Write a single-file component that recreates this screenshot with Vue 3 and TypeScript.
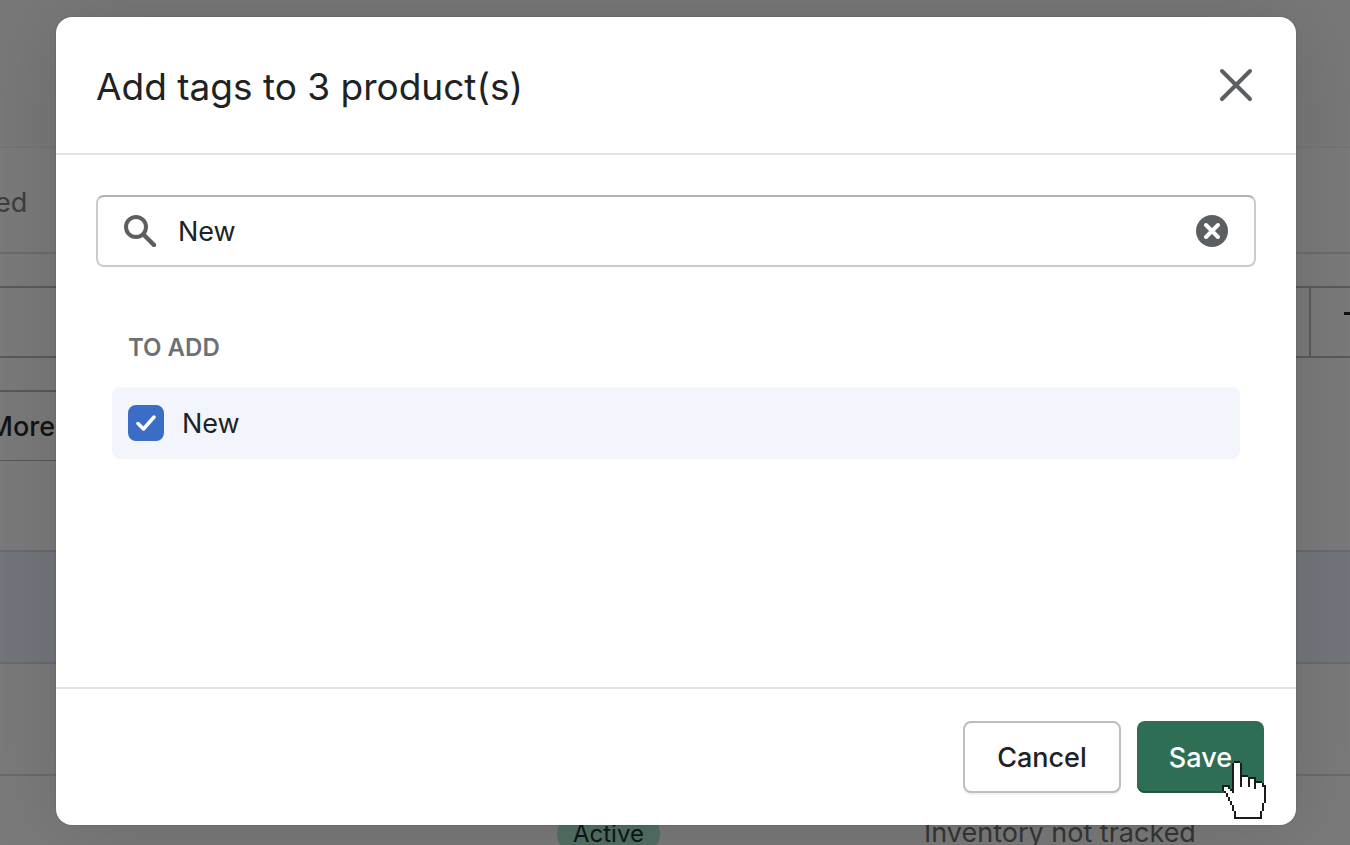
<script setup lang="ts">
import { ref } from 'vue'

const query = ref('New')
const selected = ref(true)
</script>

<template>
  <div class="page">
    <main class="products">
      <div class="topbar"></div>
      <nav class="tabs"><span class="tab">ed</span></nav>
      <div class="search-row">
        <div class="search-field"></div>
        <div class="sort"><span class="dash"></span></div>
      </div>
      <div class="filter-row"><button type="button" class="more">More</button></div>
      <div class="row first"></div>
      <div class="row picked"></div>
      <div class="row"></div>
      <div class="row last">
        <span class="status">Active</span>
        <span class="inventory">Inventory not tracked</span>
      </div>
    </main>

    <div class="backdrop">
      <section class="modal" role="dialog" aria-labelledby="modal-title">
        <header class="head">
          <h2 id="modal-title">Add tags to 3 product(s)</h2>
          <button type="button" class="icon-button" aria-label="Close">
            <svg width="34" height="34" viewBox="0 0 34 34">
              <path d="M3 3 31 31M31 3 3 31" fill="none" stroke="#5c5f62" stroke-width="4" stroke-linecap="round" />
            </svg>
          </button>
        </header>

        <div class="body">
          <div class="field">
            <svg width="32" height="32" viewBox="0 0 32 32" aria-hidden="true">
              <circle cx="12" cy="12" r="10" fill="none" stroke="#5c5f62" stroke-width="4" />
              <path d="M19.500 19.500 30 30" fill="none" stroke="#5c5f62" stroke-width="4.500" stroke-linecap="round" />
            </svg>
            <input v-model="query" type="text" aria-label="Search tags" />
            <button type="button" class="icon-button" aria-label="Clear" @click="query = ''">
              <svg width="32" height="32" viewBox="0 0 32 32">
                <circle cx="16" cy="16" r="16" fill="#5c5f62" />
                <path d="M10 10 22 22M22 10 10 22" fill="none" stroke="#fff" stroke-width="4" stroke-linecap="round" />
              </svg>
            </button>
          </div>

          <h3>TO ADD</h3>
          <label class="option">
            <span class="check">
              <input v-model="selected" type="checkbox" />
              <svg v-if="selected" width="20" height="18" viewBox="0 0 20 18" aria-hidden="true">
                <path d="M2 9.500 7.500 15 18 3" fill="none" stroke="#fff" stroke-width="3.500" stroke-linecap="round" stroke-linejoin="round" />
              </svg>
            </span>
            <span>New</span>
          </label>
        </div>

        <footer class="foot">
          <button type="button" class="btn">Cancel</button>
          <button type="button" class="btn primary">
            Save
            <svg class="cursor" width="44" height="58" viewBox="0 0 22 29" shape-rendering="crispEdges" aria-hidden="true">
              <path d="M6 1H9V8H13V9H16V10H19V11H20V12H21V21H20V25H19V28H7V25H6V22H5V20H4V18H3V16H2V15H1V13H4V14H6Z" fill="#fff" />
              <path d="M6 0h3v1h-3zM5 1h1v15h-1zM9 1h1v12h-1zM10 7h3v1h-3zM13 8h1v5h-1zM14 8h3v1h-3zM16 9h1v5h-1zM17 10h3v1h-3zM20 11h1v2h-1zM21 12h1v9h-1zM20 21h1v4h-1zM19 25h1v4h-1zM6 28h14v1h-14zM6 25h1v3h-1zM5 22h1v3h-1zM4 20h1v2h-1zM3 18h1v2h-1zM2 16h1v2h-1zM1 15h1v1h-1zM0 12h1v3h-1zM1 12h3v1h-3zM3 13h1v1h-1zM4 14h1v1h-1z" fill="#1b1b1b" />
            </svg>
          </button>
        </footer>
      </section>
    </div>
  </div>
</template>

<style>
body {
  margin: 0;
}
</style>

<style scoped>
.page {
  position: relative;
  height: 100vh;
  min-height: 845px;
  overflow: hidden;
  background: #7a7a7a;
  font-family: Inter, "Liberation Sans", sans-serif;
  font-size: 27px;
  color: #202223;
}

.page * {
  box-sizing: border-box;
}

.topbar {
  height: 148px;
  background: #787878;
  border-bottom: 1px solid #737373;
}

.tabs {
  height: 106px;
  display: flex;
  align-items: center;
  padding-top: 4px;
  border-bottom: 2px solid #6b6b6b;
}

.tab {
  margin-left: -5px;
  color: #3c3e40;
}

.search-row {
  display: flex;
  height: 72px;
  margin-top: 32px;
  border: 2px solid #585a5c;
  border-width: 2px 0;
}

.search-field {
  flex: 1;
  border-right: 2px solid #585a5c;
}

.sort {
  width: 39px;
  display: flex;
  justify-content: flex-end;
  padding-top: 24px;
}

.dash {
  width: 6px;
  height: 3px;
  background: #111;
}

.filter-row {
  display: flex;
  margin-top: 32px;
}

.more {
  width: 80px;
  height: 71px;
  margin-left: -24px;
  padding: 0 1px 0 0;
  border: 0 solid #575859;
  border-width: 2px 0 1px;
  background: none;
  font: 500 27px Inter, "Liberation Sans", sans-serif;
  text-align: right;
  color: #111314;
}

.row {
  height: 112px;
  border-bottom: 2px solid #696a6b;
}

.first {
  height: 91px;
}

.picked {
  background: #72757b;
}

.last {
  display: grid;
  grid-template-columns: 557fr 367fr 426fr;
  align-items: start;
  padding-top: 38px;
  font-size: 24px;
  line-height: 40px;
}

.status {
  grid-column: 2;
  justify-self: start;
  padding: 0 16px;
  border-radius: 20px;
  background: #526f64;
  color: #101615;
}

.inventory {
  font-size: 27px;
  line-height: 38px;
  color: #343638;
}

.backdrop {
  position: absolute;
  inset: 0;
  padding: 17px 54px 20px 56px;
}

.modal {
  border-radius: 16px;
  background: #fff;
  box-shadow: 0 0 2px rgba(0, 0, 0, 0.2), 0 4px 80px rgba(0, 0, 0, 0.13);
}

.head {
  display: flex;
  align-items: center;
  justify-content: space-between;
  height: 138px;
  padding: 0 43px 0 40px;
  border-bottom: 2px solid #e1e3e5;
}

h2 {
  margin: 0;
  padding-top: 2px;
  font-size: 37px;
  font-weight: 400;
}

.icon-button {
  display: flex;
  padding: 0;
  border: 0;
  background: none;
}

.body {
  min-height: 532px;
  padding: 40px;
}

.field {
  display: flex;
  align-items: center;
  gap: 22px;
  height: 72px;
  padding: 0 26px;
  border: 2px solid #c9cccf;
  border-top-color: #aeb4b9;
  border-radius: 8px;
}

.field input {
  flex: 1;
  min-width: 0;
  padding: 0;
  border: 0;
  outline: 0;
  background: none;
  font: inherit;
  color: inherit;
}

h3 {
  margin: 66px 32px 24px;
  font-size: 24px;
  font-weight: 600;
  line-height: 30px;
  color: #6d7175;
}

.option {
  display: flex;
  align-items: center;
  gap: 18px;
  height: 72px;
  margin: 0 16px;
  padding: 0 16px;
  border-radius: 8px;
  background: #f2f6fc;
}

.check {
  display: grid;
  place-items: center;
}

.check > * {
  grid-area: 1 / 1;
}

.check input {
  appearance: none;
  width: 36px;
  height: 36px;
  margin: 0;
  border: 2px solid #8c9196;
  border-radius: 8px;
}

.check input:checked {
  border-color: #3b6cc6;
  background: #3b6cc6;
}

.check svg {
  pointer-events: none;
}

.foot {
  display: flex;
  justify-content: flex-end;
  gap: 16px;
  padding: 32px;
  border-top: 2px solid #e1e3e5;
}

.btn {
  position: relative;
  height: 72px;
  padding: 0 32px;
  border: 2px solid #babfc3;
  border-radius: 8px;
  background: #fff;
  box-shadow: 0 2px 0 rgba(0, 0, 0, 0.05);
  font: 500 27px Inter, "Liberation Sans", sans-serif;
  color: #202223;
}

.primary {
  border: 0;
  background: #2e6e55;
  box-shadow: inset 0 -2px 0 #235641;
  color: #fff;
}

.cursor {
  position: absolute;
  right: -2px;
  bottom: -26px;
}
</style>
